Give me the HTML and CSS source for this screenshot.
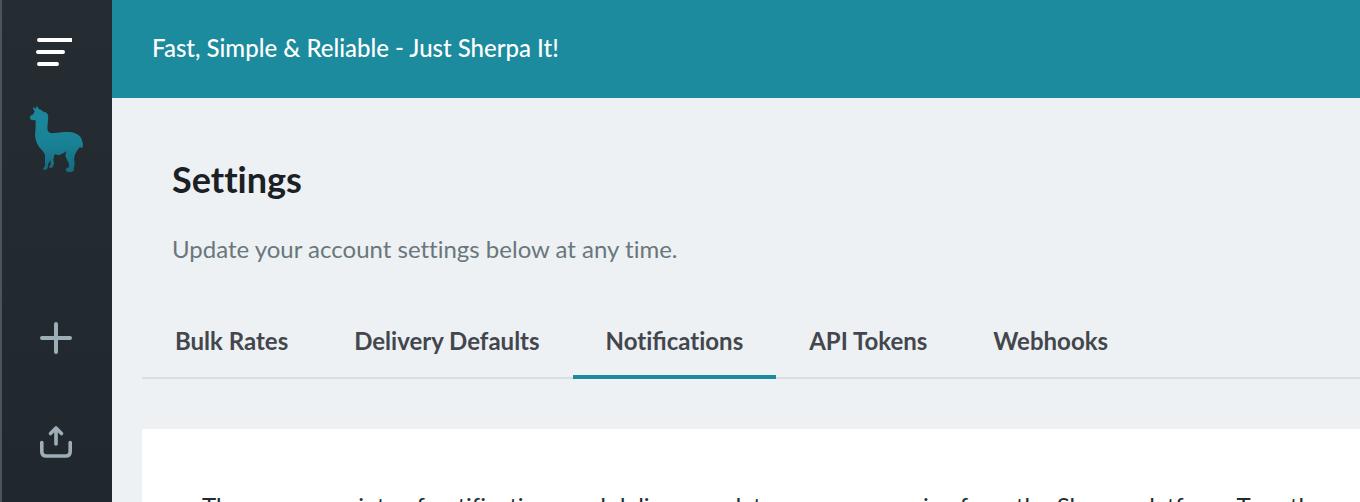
FILE: index.html
```html
<!DOCTYPE html>
<html lang="en">
<head>
<meta charset="utf-8">
<title>Settings</title>
<link rel="stylesheet" href="styles.css">
</head>
<body>
<div class="app">
  <nav class="sidebar">
    <button class="icon-button menu" aria-label="Menu">
      <svg width="40" height="32" viewBox="0 0 40 32" fill="none" stroke="#fff" stroke-width="4" stroke-linecap="round"><path d="M4 4h32" stroke-linecap="butt"/><path d="M3 4h10M2 16h25M3 28h18"/></svg>
    </button>
    <a class="logo" href="#" aria-label="Home">
      <svg width="56" height="70" viewBox="39 27 168 210"><defs><linearGradient id="coat" x1="0" y1="0" x2="0" y2="1"><stop offset="0" stop-color="#1c879c"/><stop offset=".55" stop-color="#198297"/><stop offset="1" stop-color="#156a7a"/></linearGradient></defs><path fill="url(#coat)" d="M55 35L62 41 66 33 72 43C83 45 82 51 91 52 100 56 101 64 99 75L97 100Q97 112 108 115C122 115 134 111 150 111 173 110 191 115 199 130L204 147 202 159 194 157Q185 168 181 176C176 188 177 194 179 202L176 228 167 232 155 230 152 222 162 216 162 206Q154 192 151 182L154 168Q148 174 141 176L132 181 119 178 115 193 117 207 111 219 101 217 107 207 106 195 99 209 98 219 91 226 84 223 90 212 90 180Q85 168 77 161 65 149 62 132C58 117 63 102 62 90L62 76 49 75 44 68 47 62 55 58 59 49 55 42Z"/></svg>
    </a>
    <button class="icon-button add" aria-label="Add delivery">
      <svg width="40" height="40" viewBox="0 0 40 40" fill="none" stroke="#9daeb6" stroke-width="4" stroke-linecap="round"><path d="M20 6v28M6 20h28"/></svg>
    </button>
    <button class="icon-button" aria-label="Upload">
      <svg width="40" height="40" viewBox="0 0 40 40" fill="none" stroke="#9daeb6" stroke-width="3.6" stroke-linecap="round" stroke-linejoin="round"><path d="M20 22V6M14.500 11.500L20 6 25.500 11.500M5.800 20.500v9q0 4.500 4.500 4.500h19.400q4.500 0 4.500-4.500v-9"/></svg>
    </button>
  </nav>
  <div class="page">
    <header class="banner">Fast, Simple &amp; Reliable - Just Sherpa It!</header>
    <main class="content">
      <div class="intro">
        <h1 class="title">Settings</h1>
        <p class="subtitle">Update your account settings below at any time.</p>
      </div>
      <div class="tabs" role="tablist">
        <button class="tab" role="tab">Bulk Rates</button>
        <button class="tab" role="tab">Delivery Defaults</button>
        <button class="tab active" role="tab" aria-selected="true">Noti<span class="ligature">fi</span>cations</button>
        <button class="tab" role="tab">API Tokens</button>
        <button class="tab" role="tab">Webhooks</button>
      </div>
      <section class="panel">
        <p class="panel-text">There are a variety of notifications and delivery updates you can receive from the Sherpa platform. Turn them on</p>
      </section>
    </main>
  </div>
</div>
</body>
</html>
```
FILE: styles.css
```css
* {
  box-sizing: border-box;
}

body {
  margin: 0;
  background: #edf1f4;
  color: #212b30;
  font: 24px/32px Lato, "Liberation Sans", sans-serif;
  font-variant-ligatures: none;
  overflow: hidden;
}

h1, p {
  margin: 0;
}

.app {
  display: flex;
  height: 100vh;
}

.sidebar {
  display: flex;
  flex: none;
  flex-direction: column;
  align-items: center;
  width: 112px;
  padding-top: 36px;
  border-left: 2px solid #4b5559;
  background: linear-gradient(#252d32, #20282e);
}

.icon-button {
  display: flex;
  padding: 0;
  border: 0;
  background: none;
  cursor: pointer;
}

.icon-button,
.logo {
  margin-right: 2px;
}

.logo {
  display: flex;
  margin-top: 36px;
}

.add {
  margin-top: 144px;
  margin-bottom: 64px;
}

.page {
  flex: 1;
  min-width: 0;
}

.banner {
  padding: 32px 40px 34px;
  background: #1b8b9d;
  color: #fff;
  font-weight: 500;
}

.content {
  padding: 60px 0 0 30px;
}

.intro {
  padding-left: 30px;
}

.title {
  color: #1b2025;
  font-size: 36px;
  line-height: 42px;
  font-weight: 700;
}

.subtitle {
  margin-top: 33px;
  color: #69777c;
}

.tabs {
  display: flex;
  margin-top: 46px;
  box-shadow: inset 0 -2px #d9dee1;
}

.tab {
  padding: 14px 33px 18px;
  border: 0;
  border-bottom: 4px solid transparent;
  background: none;
  color: #43474d;
  font: inherit;
  font-variant-ligatures: none;
  font-weight: 700;
  white-space: nowrap;
  cursor: pointer;
}

.ligature {
  font-variant-ligatures: normal;
}

.active {
  border-bottom-color: #1b8b9d;
}

.panel {
  margin-top: 50px;
  padding: 61px 60px;
  background: #fff;
}

.panel-text {
  white-space: nowrap;
}
```
